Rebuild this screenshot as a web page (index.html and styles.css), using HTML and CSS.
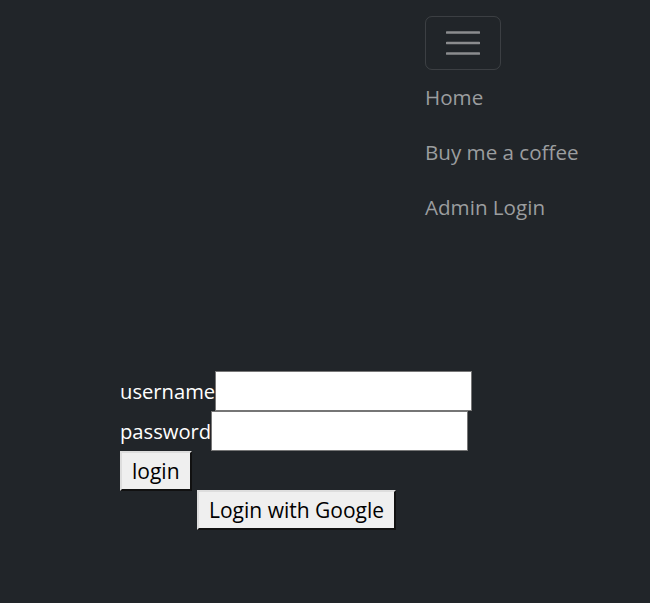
FILE: index.html
```html
<!DOCTYPE html>
<html>
<head>
<meta charset="utf-8">
<link rel="stylesheet" href="styles.css">
</head>
<body>
<nav class="navbar">
  <div class="nav-col">
    <button class="toggler" aria-label="Toggle navigation">
      <svg width="34" height="26" viewBox="0 0 34 26"><path d="M1 2.5h32M1 13h32M1 23.5h32" stroke="#8b8c8e" stroke-width="2.6" stroke-linecap="round"/></svg>
    </button>
    <ul class="links">
      <li><a href="#">Home</a></li>
      <li><a href="#">Buy me a coffee</a></li>
      <li><a href="#">Admin Login</a></li>
    </ul>
  </div>
</nav>
<form class="login">
  <div class="row"><label>username</label><input type="text" class="field"></div>
  <div class="row"><label>password</label><input type="password" class="field"></div>
  <div class="row"><button type="button" class="btn">login</button></div>
  <div class="row google"><button type="button" class="btn">Login with Google</button></div>
</form>
</body>
</html>
```

FILE: styles.css
```css
html, body {
  margin: 0;
  background: #212529;
  height: 100%;
}
body {
  font-family: "Open Sans", "Noto Sans", sans-serif;
  color: #fff;
}
.navbar {
  display: flex;
  justify-content: flex-start;
  padding: 16px 0 0 425px;
}
.nav-col {
  display: flex;
  flex-direction: column;
  align-items: flex-start;
}
.toggler {
  width: 76px;
  height: 54px;
  box-sizing: border-box;
  background: transparent;
  border: 1px solid rgba(255,255,255,0.12);
  border-radius: 7px;
  display: flex;
  align-items: center;
  justify-content: center;
  padding: 0;
}
.toggler svg { display: block; }
.links {
  list-style: none;
  margin: 0;
  padding: 0;
}
.links li {
  height: 55px;
  line-height: 55px;
}
.links a {
  color: #9b9d9f;
  text-decoration: none;
  font-size: 20.6px;
}
.login {
  padding-left: 120px;
  margin-top: 136px;
}
.row {
  display: flex;
  align-items: center;
  height: 40px;
  font-size: 20.2px;
}
.row label { color: #fff; }
.field {
  width: 257px;
  height: 40px;
  box-sizing: border-box;
  border: 1px solid #767676;
  background: #fff;
  margin: 0;
  padding: 0;
}
.btn {
  font-family: inherit;
  font-size: 21px;
  color: #000;
  background: #efefef;
  border: 2px solid;
  border-color: #ddd #111 #111 #ddd;
  height: 40px;
  padding: 0 10px;
  margin: 0;
}
.row.google {
  padding-left: 77px;
  height: 39px;
  margin-top: -1px;
}
```
